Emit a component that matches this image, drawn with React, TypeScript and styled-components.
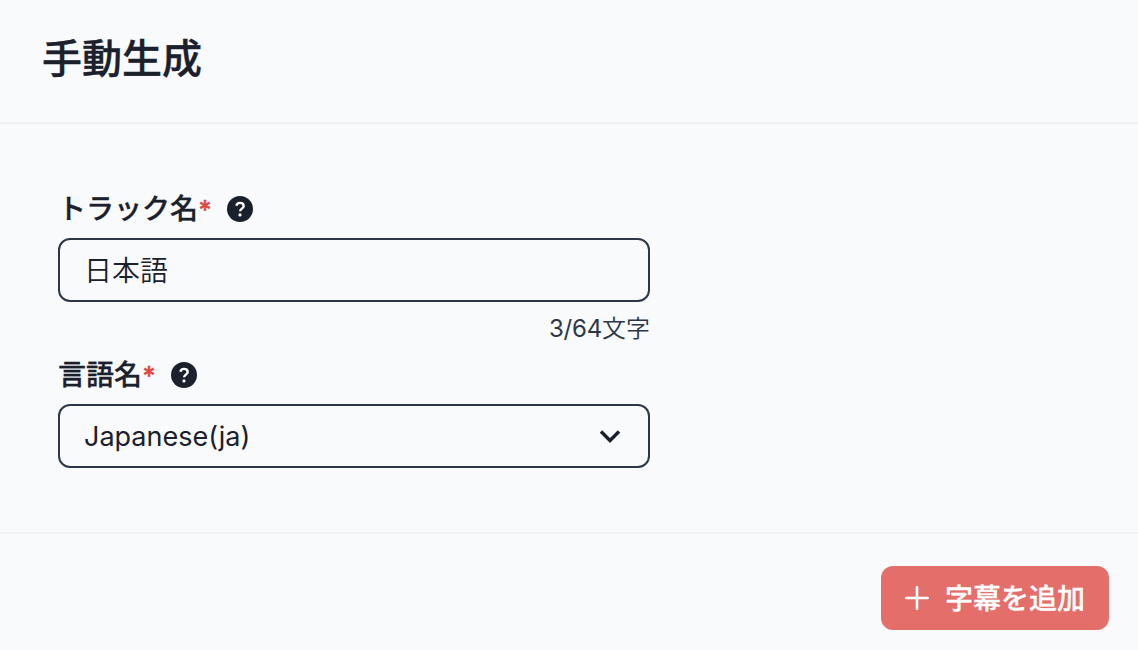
import React from 'react';
import styled, { createGlobalStyle } from 'styled-components';

const GlobalStyle = createGlobalStyle`
  *, *::before, *::after {
    box-sizing: border-box;
  }

  body {
    margin: 0;
    background: #f9fafc;
    color: #1a202c;
    font-family: Inter, 'Noto Sans CJK JP', sans-serif;
  }
`;

const Dialog = styled.section`
  display: flex;
  flex-direction: column;
  height: 650px;
`;

const Header = styled.header`
  height: 124px;
  padding: 30px 42px 0;
  border-bottom: 2px solid #edf0f5;
`;

const Title = styled.h1`
  margin: 0;
  font-size: 40px;
  font-weight: 500;
  line-height: 58px;
  -webkit-text-stroke: 0.4px currentColor;
`;

const Body = styled.div`
  flex: 1;
  padding: 64px 58px 0;
`;

const FieldRoot = styled.div`
  width: 592px;
`;

const LabelRow = styled.div`
  display: flex;
  align-items: center;
  height: 42px;
  margin-bottom: 8px;
`;

const Label = styled.label`
  font-size: 28px;
  font-weight: 500;
  line-height: 42px;
  -webkit-text-stroke: 0.3px currentColor;
`;

const Required = styled.span`
  display: inline-block;
  width: 12px;
  color: #dc4a44;
  font-size: 26px;
  font-weight: 600;
  line-height: 1;
`;

const HelpIcon = styled.svg`
  width: 26px;
  height: 26px;
  margin-left: 17px;
`;

const Control = styled.div`
  display: flex;
  align-items: center;
  height: 64px;
  padding: 0 26px 0 24px;
  border: 2px solid #2d3748;
  border-radius: 12px;
`;

const Input = styled.input`
  width: 100%;
  padding: 2px 0 0;
  border: none;
  outline: none;
  background: transparent;
  color: inherit;
  font: 350 28px/42px Inter, 'Noto Sans CJK JP', sans-serif;
`;

const SelectValue = styled.span`
  flex: 1;
  padding-top: 1px;
  font-size: 27px;
  line-height: 42px;
`;

const Counter = styled.div`
  height: 52px;
  padding-top: 9px;
  color: #2d3748;
  font-size: 24px;
  font-weight: 350;
  line-height: 36px;
  text-align: right;
`;

const Count = styled.span`
  font-weight: 400;
  letter-spacing: -0.2px;
`;

const Footer = styled.footer`
  display: flex;
  justify-content: flex-end;
  height: 118px;
  padding: 32px 29px 0;
  border-top: 2px solid #f0f2f8;
`;

const AddButton = styled.button`
  display: flex;
  align-items: center;
  gap: 16px;
  width: 228px;
  height: 64px;
  padding: 0 24px;
  border: none;
  border-radius: 12px;
  background: #e46e69;
  color: #fff;
  font: 500 28px/42px Inter, 'Noto Sans CJK JP', sans-serif;
  white-space: nowrap;
  -webkit-text-stroke: 0.3px currentColor;
`;

const ButtonText = styled.span`
  padding-top: 2px;
`;

function FieldLabel({ htmlFor, children }: { htmlFor: string; children: React.ReactNode }) {
  return (
    <LabelRow>
      <Label htmlFor={htmlFor}>
        {children}<Required>*</Required>
      </Label>
      <HelpIcon viewBox="0 0 26 26" fill="none">
        <circle cx="13" cy="13" r="13" fill="#1a202c" />
        <path
          d="M9.4 9.8C9.7 7.8 11.1 6.9 13 6.9c2.2 0 3.7 1.2 3.7 3.1 0 2.6-3.6 2.7-3.6 5.3"
          stroke="#fff"
          strokeWidth="2.4"
        />
        <circle cx="13" cy="18.9" r="1.6" fill="#fff" />
      </HelpIcon>
    </LabelRow>
  );
}

export default function App() {
  const [name, setName] = React.useState('日本語');

  return (
    <>
      <GlobalStyle />
      <Dialog>
        <Header>
          <Title>手動生成</Title>
        </Header>
        <Body>
          <FieldRoot>
            <FieldLabel htmlFor="track">トラック名</FieldLabel>
            <Control>
              <Input id="track" value={name} maxLength={64} onChange={e => setName(e.target.value)} />
            </Control>
            <Counter><Count>{name.length}/64</Count>文字</Counter>
          </FieldRoot>
          <FieldRoot>
            <FieldLabel htmlFor="language">言語名</FieldLabel>
            <Control id="language">
              <SelectValue>Japanese(ja)</SelectValue>
              <svg width="24" height="24" viewBox="0 0 24 24" fill="none">
                <path d="M3 7.5l9 9 9-9" stroke="#1a202c" strokeWidth="3.4" />
              </svg>
            </Control>
          </FieldRoot>
        </Body>
        <Footer>
          <AddButton>
            <svg width="24" height="24" viewBox="0 0 24 24" fill="none">
              <path d="M12 1.2v21.6M1.2 12h21.6" stroke="#fff" strokeWidth="2.6" strokeLinecap="round" />
            </svg>
            <ButtonText>字幕を追加</ButtonText>
          </AddButton>
        </Footer>
      </Dialog>
    </>
  );
}
